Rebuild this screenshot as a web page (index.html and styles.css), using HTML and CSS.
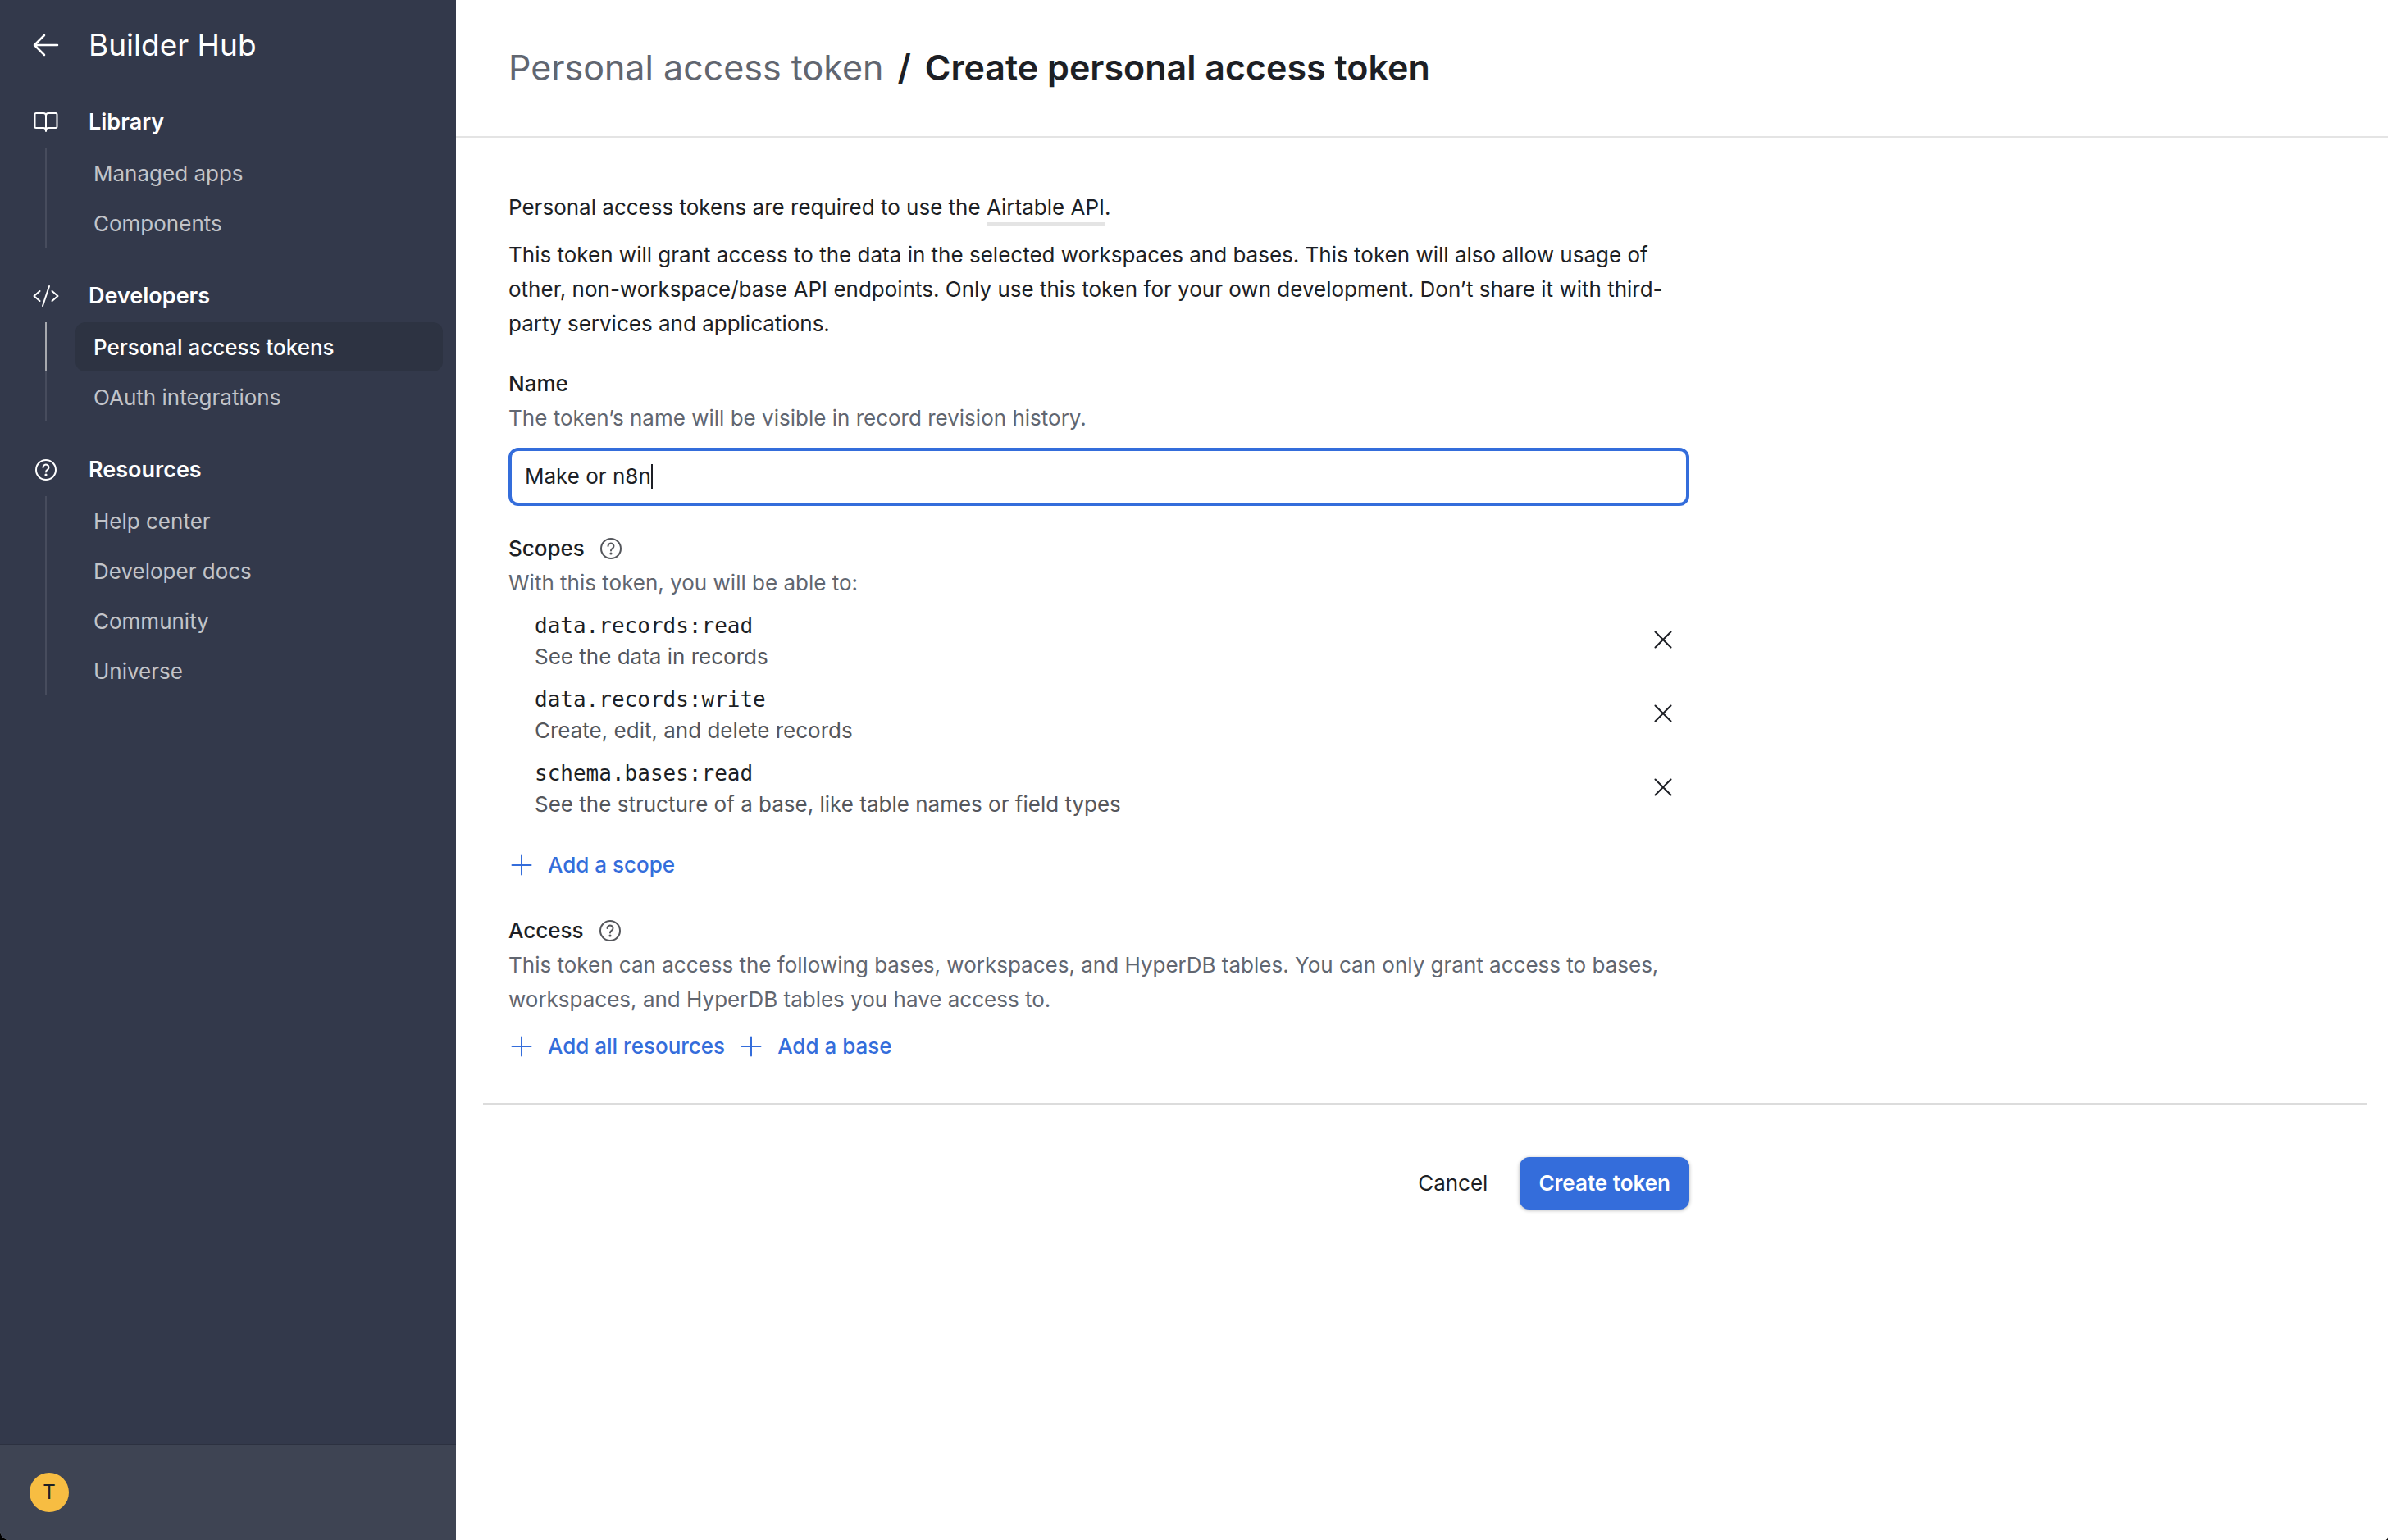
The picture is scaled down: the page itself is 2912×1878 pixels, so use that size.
FILE: index.html
```html
<!DOCTYPE html>
<html lang="en">
<head>
<meta charset="utf-8">
<title>Create personal access token</title>
<link rel="stylesheet" href="styles.css">
</head>
<body>
<svg class="sprite" aria-hidden="true">
  <symbol id="help" viewBox="0 0 32 32"><circle cx="16" cy="16" r="12"/><path d="M12.5 13a3.5 3.3 0 1 1 5.4 2.7c-1.1.7-1.9 1.3-1.9 2.8"/><circle class="dot" cx="16" cy="22" r="1.6"/></symbol>
  <symbol id="plus" viewBox="0 0 32 32"><path d="M16 4.500v23M4.500 16h23"/></symbol>
  <symbol id="close" viewBox="0 0 32 32"><path d="M6.500 6.500l19 19M25.500 6.500l-19 19"/></symbol>
</svg>
<div class="app">
  <aside class="sidebar">
    <header class="hub">
      <a class="hub-back" href="#" aria-label="Back"><svg class="icon icon-bold" viewBox="0 0 32 32"><path d="M30 16H2M14 4L2 16l12 12"/></svg></a>
      <span class="hub-title">Builder Hub</span>
    </header>
    <nav class="nav">
      <section class="group">
        <h2 class="group-title"><svg class="icon" viewBox="0 0 32 32"><path d="M16 8c0-1.700-1-3-3-3H4a1.500 1.500 0 0 0-1.500 1.500v15A1.500 1.500 0 0 0 4 23h9c2 0 3 1.500 3 4 0-2.500 1-4 3-4h9a1.500 1.500 0 0 0 1.500-1.500v-15A1.500 1.500 0 0 0 28 5h-9c-2 0-3 1.300-3 3zM16 8v18"/></svg>Library</h2>
        <ul class="links">
          <li><a href="#">Managed apps</a></li>
          <li><a href="#">Components</a></li>
        </ul>
      </section>
      <section class="group">
        <h2 class="group-title"><svg class="icon" viewBox="0 0 32 32"><path d="M8.500 10L1.500 16l7 6M23.500 10l7 6-7 6M20 4l-8 24"/></svg>Developers</h2>
        <ul class="links">
          <li><a class="active" href="#" aria-current="page">Personal access tokens</a></li>
          <li><a href="#">OAuth integrations</a></li>
        </ul>
      </section>
      <section class="group">
        <h2 class="group-title"><svg class="icon"><use href="#help"/></svg>Resources</h2>
        <ul class="links">
          <li><a href="#">Help center</a></li>
          <li><a href="#">Developer docs</a></li>
          <li><a href="#">Community</a></li>
          <li><a href="#">Universe</a></li>
        </ul>
      </section>
    </nav>
    <footer class="account"><button class="avatar" type="button" aria-label="Account">T</button></footer>
  </aside>
  <main class="main">
    <header class="page-head">
      <h1 class="crumbs"><a href="#">Personal access token</a><span>/</span><span>Create personal access token</span></h1>
    </header>
    <form class="form">
      <div class="fields">
        <div class="intro">
          <p>Personal access tokens are required to use the <a href="#">Airtable API</a>.</p>
          <p>This token will grant access to the data in the selected workspaces and bases. This token will also allow usage of other, non-workspace/base API endpoints. Only use this token for your own development. Don’t share it with third-party services and applications.</p>
        </div>
        <section class="field">
          <label class="label" for="name">Name</label>
          <p class="hint">The token’s name will be visible in record revision history.</p>
          <div class="text-box"><input id="name" type="text" value="Make or n8n" autocomplete="off"><span class="caret"></span></div>
        </section>
        <section class="field">
          <h2 class="label">Scopes <svg class="icon"><use href="#help"/></svg></h2>
          <p class="hint">With this token, you will be able to:</p>
          <ul class="scopes">
            <li><div><code>data.records:read</code><p>See the data in records</p></div><button type="button" aria-label="Remove data.records:read"><svg class="icon"><use href="#close"/></svg></button></li>
            <li><div><code>data.records:write</code><p>Create, edit, and delete records</p></div><button type="button" aria-label="Remove data.records:write"><svg class="icon"><use href="#close"/></svg></button></li>
            <li><div><code>schema.bases:read</code><p>See the structure of a base, like table names or field types</p></div><button type="button" aria-label="Remove schema.bases:read"><svg class="icon"><use href="#close"/></svg></button></li>
          </ul>
          <div class="adders"><button type="button"><svg class="icon"><use href="#plus"/></svg>Add a scope</button></div>
        </section>
        <section class="field">
          <h2 class="label">Access <svg class="icon"><use href="#help"/></svg></h2>
          <p class="hint">This token can access the following bases, workspaces, and HyperDB tables. You can only grant access to bases, workspaces, and HyperDB tables you have access to.</p>
          <div class="adders"><button type="button"><svg class="icon"><use href="#plus"/></svg>Add all resources</button><button type="button"><svg class="icon"><use href="#plus"/></svg>Add a base</button></div>
        </section>
      </div>
      <hr>
      <div class="actions">
        <button class="cancel" type="button">Cancel</button>
        <button class="submit" type="submit">Create token</button>
      </div>
    </form>
  </main>
</div>
</body>
</html>
```
FILE: styles.css
```css
* { box-sizing: border-box; margin: 0; padding: 0; }
body { background: #000; font: 26px/42px Inter, "Liberation Sans", sans-serif; color: #1d1f25; }
ul { list-style: none; }
a { color: inherit; text-decoration: none; }
button { font: inherit; color: inherit; background: none; border: 0; cursor: pointer; }
.sprite { position: absolute; width: 0; height: 0; }
.icon { width: 32px; height: 32px; flex: none; fill: none; stroke: currentColor; stroke-width: 2; stroke-linecap: round; stroke-linejoin: round; }
.icon-bold { stroke-width: 2.5; }
.dot { fill: currentColor; stroke: none; }

.app { display: flex; min-height: 100vh; border-radius: 0 0 4px 12px; overflow: hidden; background: #fff; }
.sidebar { display: flex; flex-direction: column; flex: none; width: 556px; background: #33394b; color: #fff; }
.hub { display: flex; align-items: center; gap: 36px; height: 108px; padding: 1px 40px 0; }
.hub-title { font-size: 37px; line-height: 48px; }
.hub-back { display: flex; }
.nav { flex: 1; }
.group { padding-top: 17px; }
.group-title { display: flex; align-items: center; gap: 36px; height: 48px; margin-bottom: 8px; padding: 0 40px; font-size: 27px; font-weight: 600; }
.group + .group { padding-top: 35px; }
.links { position: relative; display: flex; flex-direction: column; gap: 1px; margin: 0 16px 0 55px; border-left: 2px solid #474c5d; padding-left: 35px; }
.links a { display: block; height: 60px; padding: 0 22px; border-radius: 12px; line-height: 62px; color: #c2c4c9; }
.links a.active { background: #2d3342; color: #fff; font-weight: 500; }
.links a.active::before { content: ""; position: absolute; left: -2px; width: 2px; height: 60px; background: #a7a9ae; }
.account { display: flex; align-items: center; height: 117px; padding: 0 36px; border-top: 1px solid #2c3140; background: #3e4453; }
.avatar { width: 48px; height: 48px; border-radius: 50%; background: #f7bd42; color: #1d1f25; font-size: 24px; line-height: 48px; }

.main { flex: 1; min-width: 0; }
.page-head { padding: 50px 64px 52px; border-bottom: 2px solid #e4e4e4; }
.crumbs { display: flex; gap: 17px; font-size: 43px; line-height: 64px; font-weight: 600; }
.crumbs a { color: #616670; font-weight: 400; }
.form { padding: 64px 26px 0 33px; }
.fields { max-width: 1471px; padding: 0 0 41px 31px; }
.intro { display: flex; flex-direction: column; gap: 16px; }
.intro a { padding-bottom: 3px; border-bottom: 4px solid #e4e4e4; }
.field { margin-top: 31px; }
.label { display: flex; align-items: center; gap: 16px; font-size: 26px; line-height: 42px; font-weight: 500; }
.label .icon { color: #55575c; }
.hint { color: #616670; }
.text-box { position: relative; margin-top: 15px; }
.text-box input { display: block; width: 100%; height: 71px; padding: 0 16px 2px; border: 4px solid #346ddb; border-radius: 12px; outline: 0; background: #fff; font: inherit; color: inherit; }
.caret { position: absolute; left: 174px; top: 20px; width: 2px; height: 30px; background: #1d1f25; }
.scopes { padding: 3px 0 14px; }
.scopes li { display: flex; align-items: center; justify-content: space-between; height: 90px; padding: 0 16px 0 32px; }
.scopes li > div { padding-top: 4px; }
.scopes code { display: block; font: 26px/37px "DejaVu Sans Mono", monospace; }
.scopes p { line-height: 37px; color: #55575c; }
.scopes button { display: flex; padding: 0; }
.adders { display: flex; gap: 16px; height: 56px; margin-top: 8px; }
.adders button { display: flex; align-items: center; gap: 16px; color: #346ddb; font-weight: 500; }
hr { border: 0; border-top: 2px solid #dcdcdc; }
.actions { display: flex; align-items: center; justify-content: flex-end; gap: 16px; max-width: 1471px; padding-top: 64px; }
.actions button { height: 64px; padding: 0 23px; border-radius: 12px; }
.actions .submit { background: #346ddb; color: #fff; font-weight: 600; box-shadow: 0 1px 4px rgba(0, 0, 0, 0.3); }
```
